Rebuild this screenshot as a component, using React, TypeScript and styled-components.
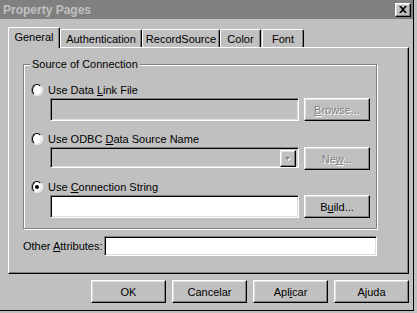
import React from "react";
import styled, { createGlobalStyle, css } from "styled-components";

const GlobalStyle = createGlobalStyle`
  html, body {
    margin: 0;
    padding: 0;
    background: #c0c0c0;
  }
  body {
    font-family: "Liberation Sans", Arial, sans-serif;
    font-size: 11px;
    color: #000;
  }
  * {
    box-sizing: border-box;
  }
`;

const raised = css`
  border: 1px solid;
  border-color: #fff #000 #000 #fff;
  box-shadow: inset -1px -1px 0 #808080, inset 1px 1px 0 #dfdfdf;
`;

const sunken = css`
  border: 1px solid;
  border-color: #808080 #fff #fff #808080;
  box-shadow: inset 1px 1px 0 #000, inset -1px -1px 0 #dfdfdf;
`;

const Window = styled.div`
  width: 414px;
  height: 311px;
  display: flex;
  flex-direction: column;
  background: #c0c0c0;
  border-right: 1px solid #000;
  border-bottom: 1px solid #000;
`;

const TitleBar = styled.div`
  height: 19px;
  flex: none;
  display: flex;
  align-items: center;
  justify-content: space-between;
  padding: 0 2px 0 3px;
  background: #808080;
  color: #c0c0c0;
  font-weight: bold;
  font-size: 12px;
`;

const CloseButton = styled.div`
  ${raised};
  width: 16px;
  height: 14px;
  background: #c0c0c0;
  display: flex;
  align-items: center;
  justify-content: center;
`;

const Body = styled.div`
  flex: 1;
  display: flex;
  flex-direction: column;
  padding: 8px 5px 0 8px;
`;

const TabStrip = styled.div`
  display: flex;
  align-items: flex-end;
  height: 20px;
`;

const Tab = styled.div<{ $active?: boolean; $w: number; $gap?: number }>`
  position: relative;
  width: ${(p) => p.$w}px;
  height: ${(p) => (p.$active ? 21 : 18)}px;
  margin-left: ${(p) => p.$gap ?? 0}px;
  margin-bottom: ${(p) => (p.$active ? -1 : 0)}px;
  z-index: ${(p) => (p.$active ? 1 : 0)};
  background: #c0c0c0;
  border-top: 1px solid #fff;
  border-left: 1px solid #fff;
  border-right: 1px solid #000;
  border-radius: 2px 2px 0 0;
  box-shadow: inset -1px 0 0 #808080;
  display: flex;
  align-items: ${(p) => (p.$active ? "flex-start" : "center")};
  padding-top: ${(p) => (p.$active ? 3 : 0)}px;
  justify-content: center;
  white-space: nowrap;
`;

const Panel = styled.div`
  width: 401px;
  height: 227px;
  border: 1px solid;
  border-color: #fff #000 #000 #fff;
  box-shadow: inset -1px -1px 0 #808080;
  padding: 16px 0 0 14px;
  display: flex;
  flex-direction: column;
`;

const GroupBox = styled.div`
  position: relative;
  width: 354px;
  height: 165px;
  border: 1px solid #808080;
  box-shadow: 1px 1px 0 #fff, inset 1px 1px 0 #fff;
  padding: 16px 7px 0 7px;
  display: flex;
  flex-direction: column;
`;

const Legend = styled.span`
  position: absolute;
  top: -7px;
  left: 6px;
  padding: 0 2px;
  background: #c0c0c0;
  line-height: 13px;
`;

const OptionRow = styled.label<{ $top?: number }>`
  display: flex;
  align-items: center;
  gap: 5px;
  height: 17px;
  margin-top: ${(p) => p.$top ?? 0}px;
  white-space: nowrap;
`;

const Radio = styled.span<{ $checked?: boolean }>`
  position: relative;
  width: 12px;
  height: 12px;
  border-radius: 50%;
  border: 1px solid;
  border-color: #808080 #fff #fff #808080;
  display: flex;
  align-items: center;
  justify-content: center;
  &::before {
    content: "";
    width: 10px;
    height: 10px;
    border-radius: 50%;
    border: 1px solid;
    border-color: #000 #dfdfdf #dfdfdf #000;
    background: #fff;
  }
  &::after {
    content: "";
    position: absolute;
    width: 4px;
    height: 4px;
    border-radius: 50%;
    background: ${(p) => (p.$checked ? "#000" : "transparent")};
  }
`;

const FieldRow = styled.div<{ $h?: number }>`
  display: flex;
  align-items: flex-start;
  gap: 5px;
  padding-left: 19px;
  height: ${(p) => p.$h ?? 23}px;
`;

const TextBox = styled.div<{ $disabled?: boolean; $w: number; $h?: number }>`
  ${sunken};
  flex: none;
  width: ${(p) => p.$w}px;
  height: ${(p) => p.$h ?? 23}px;
  background: ${(p) => (p.$disabled ? "#c0c0c0" : "#fff")};
`;

const Combo = styled(TextBox)`
  display: flex;
  justify-content: flex-end;
  align-items: flex-start;
  padding: 2px;
`;

const ComboArrow = styled.div`
  ${raised};
  width: 16px;
  height: 17px;
  background: #c0c0c0;
  display: flex;
  align-items: center;
  justify-content: center;
`;

const Button = styled.div<{ $disabled?: boolean; $w?: number }>`
  ${raised};
  flex: none;
  width: ${(p) => p.$w ?? 66}px;
  height: 23px;
  background: #c0c0c0;
  display: flex;
  align-items: center;
  justify-content: center;
  white-space: nowrap;
  ${(p) =>
    p.$disabled &&
    css`
      color: #808080;
      text-shadow: 1px 1px 0 #fff;
    `}
`;

const AttrRow = styled.div`
  display: flex;
  align-items: center;
  justify-content: space-between;
  width: 354px;
  margin-top: 7px;
  white-space: nowrap;
`;

const ButtonBar = styled.div`
  display: flex;
  justify-content: flex-end;
  gap: 6px;
  width: 401px;
  margin-top: 6px;
`;

const Mn = styled.span`
  text-decoration: underline;
  text-underline-offset: 1px;
`;

function CloseGlyph() {
  return (
    <svg width="8" height="7" viewBox="0 0 8 7">
      <path d="M0 0h2l2 2 2-2h2L5 3.5 8 7H6L4 5 2 7H0l3-3.5z" fill="#000" />
    </svg>
  );
}

function ArrowGlyph() {
  return (
    <svg width="8" height="5" viewBox="0 0 8 5">
      <path d="M2 2h5l-2.5 3z" fill="#fff" />
      <path d="M1 1h5L3.5 4z" fill="#808080" />
    </svg>
  );
}

export default function App() {
  return (
    <>
      <GlobalStyle />
      <Window>
        <TitleBar>
          <span>Property Pages</span>
          <CloseButton>
            <CloseGlyph />
          </CloseButton>
        </TitleBar>
        <Body>
          <TabStrip>
            <Tab $active $w={52}>General</Tab>
            <Tab $w={82}>Authentication</Tab>
            <Tab $w={78}>RecordSource</Tab>
            <Tab $w={41}>Color</Tab>
            <Tab $w={42} $gap={1}>Font</Tab>
          </TabStrip>
          <Panel>
            <GroupBox>
              <Legend>Source of Connection</Legend>
              <OptionRow>
                <Radio />
                <span>
                  Use Data <Mn>L</Mn>ink File
                </span>
              </OptionRow>
              <FieldRow>
                <TextBox $disabled $w={249} />
                <Button $disabled>
                  <span>
                    <Mn>B</Mn>rowse...
                  </span>
                </Button>
              </FieldRow>
              <OptionRow $top={9}>
                <Radio />
                <span>
                  Use ODBC <Mn>D</Mn>ata Source Name
                </span>
              </OptionRow>
              <FieldRow $h={22}>
                <Combo $disabled $w={249} $h={21}>
                  <ComboArrow>
                    <ArrowGlyph />
                  </ComboArrow>
                </Combo>
                <Button $disabled>
                  <span>
                    Ne<Mn>w</Mn>...
                  </span>
                </Button>
              </FieldRow>
              <OptionRow $top={9}>
                <Radio $checked />
                <span>
                  Use <Mn>C</Mn>onnection String
                </span>
              </OptionRow>
              <FieldRow>
                <TextBox $w={249} />
                <Button>
                  <span>
                    B<Mn>u</Mn>ild...
                  </span>
                </Button>
              </FieldRow>
            </GroupBox>
            <AttrRow>
              <span>
                Other <Mn>A</Mn>ttributes:
              </span>
              <TextBox $w={273} $h={20} />
            </AttrRow>
          </Panel>
          <ButtonBar>
            <Button $w={75}>OK</Button>
            <Button $w={75}>Cancelar</Button>
            <Button $w={75}>
              <span>
                Apl<Mn>i</Mn>car
              </span>
            </Button>
            <Button $w={75}>Ajuda</Button>
          </ButtonBar>
        </Body>
      </Window>
    </>
  );
}
